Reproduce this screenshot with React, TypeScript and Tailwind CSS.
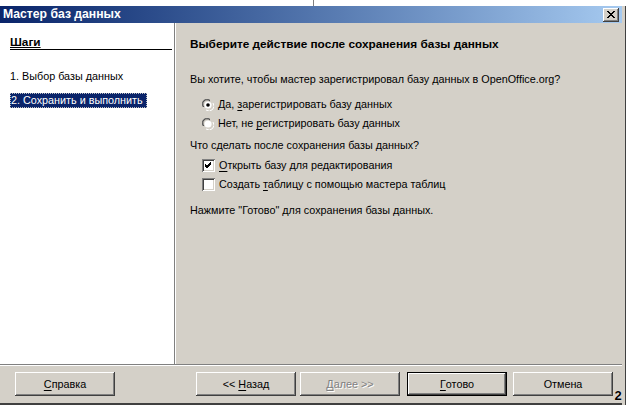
import React from "react";

const face = "bg-[#d4d0c8]";
const raised =
  "shadow-[inset_-1px_-1px_#404040,inset_1px_1px_#ffffff,inset_-2px_-2px_#808080,inset_2px_2px_#d4d0c8]";
const sunken =
  "shadow-[inset_1px_1px_#808080,inset_-1px_-1px_#ffffff,inset_2px_2px_#404040,inset_-2px_-2px_#d4d0c8]";

function U({ children }: { children: React.ReactNode }) {
  return <span className="underline underline-offset-2">{children}</span>;
}

function Radio({ checked, children }: { checked?: boolean; children: React.ReactNode }) {
  return (
    <div className="flex items-center h-[19px] pl-[203px]">
      <div className="relative w-[12px] h-[12px] shrink-0">
        <svg width="12" height="12" viewBox="0 0 12 12" className="absolute inset-0">
          <path d="M1 8 A5 5 0 0 1 8 1" fill="none" stroke="#808080" />
          <path d="M2 8 A4 4 0 0 1 8 2" fill="none" stroke="#404040" />
          <path d="M4 11 A5 5 0 0 0 11 4" fill="none" stroke="#ffffff" />
          <circle cx="6" cy="6" r="3.6" fill="#ffffff" />
          {checked && <circle cx="6" cy="6" r="1.8" fill="#000000" />}
        </svg>
      </div>
      <span className="ml-[4px]">{children}</span>
    </div>
  );
}

function Check({ checked, children }: { checked?: boolean; children: React.ReactNode }) {
  return (
    <div className="flex items-center h-[19px] pl-[203px]">
      <div className={`w-[13px] h-[13px] shrink-0 bg-white ${sunken} flex items-center justify-center`}>
        {checked && (
          <svg width="7" height="7" viewBox="0 0 7 7">
            <path d="M0 2 L2 4 L6 0 M0 3 L2 5 L6 1 M0 4 L2 6 L6 2" stroke="#000" strokeWidth="1" fill="none" />
          </svg>
        )}
      </div>
      <span className="ml-[4px]">{children}</span>
    </div>
  );
}

function Button({
  children,
  disabled,
  primary,
  className = "",
}: {
  children: React.ReactNode;
  disabled?: boolean;
  primary?: boolean;
  className?: string;
}) {
  return (
    <div
      className={`h-[24px] w-[100px] ${face} flex items-center justify-center ${
        primary
          ? "border border-black shadow-[inset_-1px_-1px_#404040,inset_1px_1px_#ffffff,inset_-2px_-2px_#808080]"
          : raised
      } ${disabled ? "text-[#808080] [text-shadow:1px_1px_#ffffff]" : "text-black"} ${className}`}
    >
      {children}
    </div>
  );
}

export default function App() {
  return (
    <div
      className="w-[626px] h-[405px] bg-white flex flex-col text-[10.8px] text-black overflow-hidden"
      style={{ fontFamily: '"Liberation Sans", Arial, sans-serif' }}
    >
      {/* desktop strip above the window */}
      <div className="h-[6px] shrink-0 flex">
        <div className="w-[313px]" />
        <div className="w-px bg-[#808080]" />
      </div>

      <div className="flex-1 flex">
        <div className="flex-1 flex flex-col">
          {/* Title bar */}
          <div className="h-[17px] shrink-0 bg-gradient-to-r from-[#0a246a] to-[#a6caf0] flex items-center pl-[3px] pr-[3px]">
            <span className="text-white font-bold text-[12.2px] flex-1">Мастер баз данных</span>
            <div className={`w-[16px] h-[14px] ${face} ${raised} flex items-center justify-center`}>
              <svg width="8" height="7" viewBox="0 0 8 7">
                <path d="M0 0 L7 7 M1 0 L8 7 M7 0 L0 7 M8 0 L1 7" stroke="#000" strokeWidth="1" />
              </svg>
            </div>
          </div>

          {/* Content */}
          <div className="h-[342px] shrink-0 flex border-b border-[#808080]">
            <div className="w-[175px] shrink-0 bg-white border-r border-[#808080] pl-[10px] pr-[2px] pt-[14px]">
              <div className="font-bold text-[11.8px] border-b border-black h-[11px] leading-[11px] box-content pb-[1px]">
                <span className="underline underline-offset-1">Шаги</span>
              </div>
              <div className="mt-[19px] h-[14px] leading-[14px]">1. Выбор базы данных</div>
              <div className="mt-[10px] h-[15px] leading-[13px] w-[137px] bg-[#0a246a] text-white border border-dotted border-[#c0c0c0]">
                2. Сохранить и выполнить
              </div>
            </div>
            <div className={`flex-1 ${face} border-l border-white pt-[14px]`}>
              <div className="font-bold text-[11.8px] pl-[14px] h-[14px] leading-[14px]">
                Выберите действие после сохранения базы данных
              </div>
              <div className="pl-[14px] mt-[21px] h-[14px] leading-[14px]">
                Вы хотите, чтобы мастер зарегистрировал базу данных в OpenOffice.org?
              </div>
              <div className="-ml-[177px] mt-[9px]">
                <Radio checked>
                  Да, <U>з</U>арегистрировать базу данных
                </Radio>
                <Radio>
                  Нет, не <U>р</U>егистрировать базу данных
                </Radio>
              </div>
              <div className="pl-[14px] mt-[5px] h-[14px] leading-[14px]">
                Что сделать после сохранения базы данных?
              </div>
              <div className="-ml-[177px] mt-[4px]">
                <Check checked>
                  <U>О</U>ткрыть базу для редактирования
                </Check>
                <Check>
                  Создать <U>т</U>аблицу с помощью мастера таблиц
                </Check>
              </div>
              <div className="pl-[14px] mt-[9px] h-[14px] leading-[14px]">
                Нажмите "Готово" для сохранения базы данных.
              </div>
            </div>
          </div>

          {/* Buttons */}
          <div className={`flex-1 ${face} border-t border-white flex items-start pt-[6px] relative`}>
            <Button className="ml-[15px]">
              <U>С</U>правка
            </Button>
            <Button className="ml-[81px]">
              {"<<\u00a0"}
              <U>Н</U>азад
            </Button>
            <Button disabled className="ml-[4px]">
              <U>Д</U>алее{"\u00a0>>"}
            </Button>
            <Button primary className="ml-[7px]">
              <U>Г</U>отово
            </Button>
            <Button className="ml-[6px]">Отмена</Button>
            <span className="absolute right-[-1px] bottom-[2px] w-[10px] text-center font-black text-[13px] leading-[11px] text-black [text-shadow:0_0_1px_#fff]">
              2
            </span>
          </div>
          <div className="h-[2px] shrink-0 bg-[#404040]" />
        </div>
        {/* right window frame */}
        <div className={`w-[4px] shrink-0 ${face} border-r border-[#404040]`} />
      </div>
    </div>
  );
}
